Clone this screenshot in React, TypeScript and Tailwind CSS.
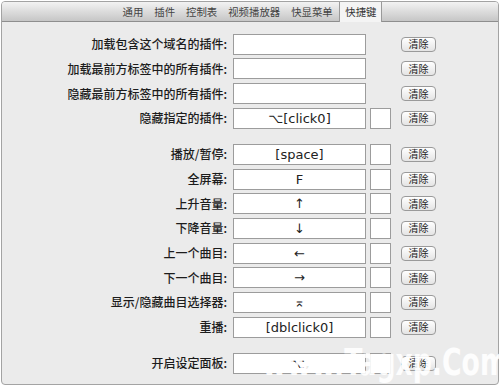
const tabs = ['通用', '插件', '控制表', '视频播放器', '快显菜单', '快捷键']

interface IRow {
  label: string
  value?: string
  extra?: boolean
}

const groups: IRow[][] = [
  [
    { label: '加载包含这个域名的插件:' },
    { label: '加载最前方标签中的所有插件:' },
    { label: '隐藏最前方标签中的所有插件:' },
    { label: '隐藏指定的插件:', value: '⌥[click0]', extra: true },
  ],
  [
    { label: '播放/暂停:', value: '[space]', extra: true },
    { label: '全屏幕:', value: 'F', extra: true },
    { label: '上升音量:', value: '↑', extra: true },
    { label: '下降音量:', value: '↓', extra: true },
    { label: '上一个曲目:', value: '←', extra: true },
    { label: '下一个曲目:', value: '→', extra: true },
    { label: '显示/隐藏曲目选择器:', value: '⌅', extra: true },
    { label: '重播:', value: '[dblclick0]', extra: true },
  ],
  [{ label: '开启设定面板:', value: '⌥,', extra: true }],
]

function ShortcutRow({ label, value, extra }: IRow) {
  return (
    <div className="flex items-center h-[24.67px]">
      <span className="w-[225px] text-right text-[12px] font-medium text-[#1c1c1c] leading-none">{label}</span>
      <div className="ml-[6px] w-[133px] h-[21px] bg-white border border-[#9c9c9c] flex items-center justify-center text-[13px] text-[#222] leading-none font-['DejaVu_Sans','Noto_Sans_CJK_SC',sans-serif]">
        {value}
      </div>
      {extra ? (
        <div className="ml-[4px] w-[21px] h-[21px] bg-white border border-[#9c9c9c]" />
      ) : (
        <div className="ml-[4px] w-[21px]" />
      )}
      <button className="ml-[10px] w-[35px] h-[15px] rounded-[4px] border border-[#9a9a9a] bg-gradient-to-b from-white to-[#e4e4e4] text-[10px] leading-none text-[#222] flex items-center justify-center">
        清除
      </button>
    </div>
  )
}

export default function App() {
  return (
    <div className="relative w-[500px] h-[386px] bg-white p-[1px] font-['Noto_Sans_CJK_SC',sans-serif] overflow-hidden">
      <div className="h-[384px] rounded-[4px] border border-[#a3a3a3] bg-[#ebebeb] flex flex-col overflow-hidden">
        <div className="h-[20px] shrink-0 bg-gradient-to-b from-[#f3f3f3] to-[#c6c6c6] border-b border-[#8e8e8e] flex items-stretch pl-[115px]">
          {tabs.map((t, i) => {
            const active = i === tabs.length - 1
            return (
              <div
                key={t}
                className={
                  active
                    ? 'px-[5px] ml-[1px] flex items-center text-[10.4px] text-[#333] bg-[#f4f4f4] border-x border-[#9a9a9a] -mb-[1px]'
                    : 'px-[5.5px] flex items-center text-[10.4px] text-[#444]'
                }
              >
                {t}
              </div>
            )
          })}
        </div>
        <div className="pt-[10px] flex flex-col gap-[11.5px]">
          {groups.map((g, gi) => (
            <div key={gi} className="flex flex-col">
              {g.map((r) => (
                <ShortcutRow key={r.label} {...r} />
              ))}
            </div>
          ))}
        </div>
      </div>
      <span className="absolute left-[262px] top-[343px] origin-left scale-x-[0.78] text-[38px] font-bold text-white/90 leading-none font-['DejaVu_Sans_Condensed','DejaVu_Sans',sans-serif]">
        www.Tagxp.Com
      </span>
    </div>
  )
}
